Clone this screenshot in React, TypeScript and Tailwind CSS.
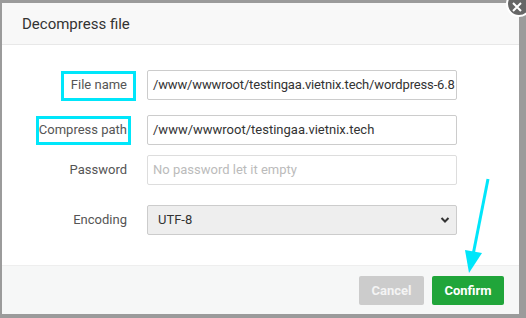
export default function App() {
  return (
    <div
      className="relative w-[526px] h-[318px] overflow-hidden bg-[#9b9b9b] pt-[3px] pl-[2px] pr-[7px] pb-[4px]"
      style={{ fontFamily: "Roboto, 'Noto Sans', sans-serif" }}
    >
      <div className="flex h-full flex-col bg-white">
        <div className="flex h-[42px] items-center border-b border-[#e8e8e8] bg-[#f8f8f8] pl-[20px] pt-[2px] text-[15px] text-[#333]">
          Decompress file
        </div>
        <div className="flex flex-1 flex-col pt-[25px] text-[13px]">
          <div className="flex items-center">
            <div className="w-[125px] text-right text-[#555]">File name</div>
            <div className="ml-[20px] flex h-[30px] w-[310px] items-center overflow-hidden whitespace-nowrap rounded-[2px] border border-[#ccc] pl-[5px] tracking-[-0.15px] text-[#333]">
              /www/wwwroot/testingaa.vietnix.tech/wordpress-6.8
            </div>
          </div>
          <div className="mt-[15px] flex items-center">
            <div className="w-[125px] text-right text-[#555]">Compress path</div>
            <div className="ml-[20px] flex h-[30px] w-[310px] items-center rounded-[2px] border border-[#ccc] pl-[5px] text-[#333]">
              /www/wwwroot/testingaa.vietnix.tech
            </div>
          </div>
          <div className="mt-[10px] flex items-center">
            <div className="w-[125px] text-right text-[#555]">Password</div>
            <div className="ml-[20px] flex h-[30px] w-[310px] items-center rounded-[2px] border border-[#ddd] pl-[5px] text-[#bbb]">
              No password let it empty
            </div>
          </div>
          <div className="mt-[20px] flex items-center">
            <div className="w-[125px] text-right text-[#555]">Encoding</div>
            <div className="ml-[20px] flex h-[30px] w-[310px] items-center justify-between rounded-[2px] border border-[#ccc] bg-[#eee] pl-[10px] pr-[6px] text-[#333]">
              <span>UTF-8</span>
              <svg width="10" height="8" viewBox="0 0 10 8">
                <path d="M1.5 2 L5 5.5 L8.5 2" fill="none" stroke="#333" strokeWidth="2" />
              </svg>
            </div>
          </div>
        </div>
        <div className="flex h-[49px] items-start justify-end gap-[8px] border-t border-[#eee] bg-[#f6f7f7] pr-[15px] pt-[10px] text-[13px] font-bold text-white">
          <div className="flex h-[29px] w-[65px] items-center justify-center rounded-[2px] bg-[#cccccc] text-[#f4f4f4]">Cancel</div>
          <div className="flex h-[29px] w-[72px] items-center justify-center rounded-[2px] bg-[#20a53a]">Confirm</div>
        </div>
      </div>

      <div className="absolute left-[61px] top-[71px] h-[30px] w-[75px] border-[3px] border-[#00e6fa]" />
      <div className="absolute left-[36px] top-[116px] h-[29px] w-[95px] border-[3px] border-[#00e6fa]" />

      <svg className="absolute left-0 top-0" width="526" height="318">
        <line x1="488" y1="179" x2="473" y2="255" stroke="#00e6fa" strokeWidth="3" />
        <polygon points="465,250 482,253 469,273" fill="#00e6fa" />
      </svg>

      <div className="absolute left-[506px] top-[-9px] flex h-[26px] w-[26px] items-center justify-center rounded-full border-[2px] border-white bg-[#666]">
        <svg width="12" height="12" viewBox="0 0 12 12" className="mt-[6px] mr-[4px]">
          <path d="M2 2 L10 10 M10 2 L2 10" stroke="white" strokeWidth="2" />
        </svg>
      </div>
    </div>
  );
}
